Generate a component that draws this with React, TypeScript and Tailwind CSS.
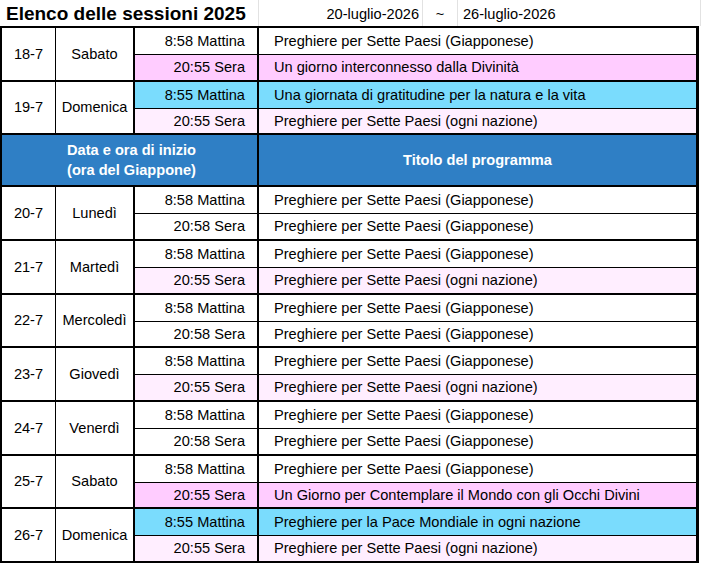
const PINK = "bg-[#ffccff]";
const LIGHT = "bg-[#ffeeff]";
const CYAN = "bg-[#7adcfd]";
const WHITE = "bg-white";

type Slot = { time: string; title: string; bg: string };
type Day = { date: string; day: string; short?: boolean; slots: [Slot, Slot] };

const GIAP = "Preghiere per Sette Paesi (Giapponese)";
const OGNI = "Preghiere per Sette Paesi (ogni nazione)";

const topDays: Day[] = [
  {
    date: "18-7",
    day: "Sabato",
    slots: [
      { time: "8:58 Mattina", title: GIAP, bg: WHITE },
      { time: "20:55 Sera", title: "Un giorno interconnesso dalla Divinità", bg: PINK },
    ],
  },
  {
    date: "19-7",
    day: "Domenica",
    short: true,
    slots: [
      { time: "8:55 Mattina", title: "Una giornata di gratitudine per la natura e la vita", bg: CYAN },
      { time: "20:55 Sera", title: OGNI, bg: LIGHT },
    ],
  },
];

const days: Day[] = [
  {
    date: "20-7",
    day: "Lunedì",
    slots: [
      { time: "8:58 Mattina", title: GIAP, bg: WHITE },
      { time: "20:58 Sera", title: GIAP, bg: WHITE },
    ],
  },
  {
    date: "21-7",
    day: "Martedì",
    slots: [
      { time: "8:58 Mattina", title: GIAP, bg: WHITE },
      { time: "20:55 Sera", title: OGNI, bg: LIGHT },
    ],
  },
  {
    date: "22-7",
    day: "Mercoledì",
    short: true,
    slots: [
      { time: "8:58 Mattina", title: GIAP, bg: WHITE },
      { time: "20:58 Sera", title: GIAP, bg: WHITE },
    ],
  },
  {
    date: "23-7",
    day: "Giovedì",
    slots: [
      { time: "8:58 Mattina", title: GIAP, bg: WHITE },
      { time: "20:55 Sera", title: OGNI, bg: LIGHT },
    ],
  },
  {
    date: "24-7",
    day: "Venerdì",
    slots: [
      { time: "8:58 Mattina", title: GIAP, bg: WHITE },
      { time: "20:58 Sera", title: GIAP, bg: WHITE },
    ],
  },
  {
    date: "25-7",
    day: "Sabato",
    short: true,
    slots: [
      { time: "8:58 Mattina", title: GIAP, bg: WHITE },
      { time: "20:55 Sera", title: "Un Giorno per Contemplare il Mondo con gli Occhi Divini", bg: PINK },
    ],
  },
  {
    date: "26-7",
    day: "Domenica",
    slots: [
      { time: "8:55 Mattina", title: "Preghiere per la Pace Mondiale in ogni nazione", bg: CYAN },
      { time: "20:55 Sera", title: OGNI, bg: LIGHT },
    ],
  },
];

function DayBlock({ d, first }: { d: Day; first: boolean }) {
  return (
    <div className={`flex ${first ? "" : "border-t-2 border-black"}`}>
      <div className="w-[54px] shrink-0 border-r border-black flex items-center justify-center">
        {d.date}
      </div>
      <div className="w-[79px] shrink-0 border-r-2 border-black flex items-center justify-center">
        {d.day}
      </div>
      <div className="flex-1 flex flex-col">
        {d.slots.map((s, i) => (
          <div
            key={i}
            className={`flex ${s.bg} ${
              i === 0 ? "h-[27px] border-b border-black" : d.short ? "h-[24px]" : "h-[25px]"
            }`}
          >
            <div className="w-[124px] shrink-0 border-r-2 border-black flex items-center justify-end pr-[12px]">
              {s.time}
            </div>
            <div className="flex-1 flex items-center pl-[15px] whitespace-nowrap">{s.title}</div>
          </div>
        ))}
      </div>
    </div>
  );
}

export default function App() {
  return (
    <div className="w-[703px] h-[575px] bg-white text-black font-['Liberation_Sans',Arial,sans-serif] text-[14.6px] leading-none">
      {/* title row */}
      <div className="flex h-[26px]">
        <div className="w-[259px] border-r border-[#e2e2e2] flex items-center pl-[6px] pt-[1px] font-bold text-[19px]">
          Elenco delle sessioni 2025
        </div>
        <div className="w-[164px] border-r border-[#e2e2e2] flex items-center justify-end pr-[3px] pt-[2px]">
          20-luglio-2026
        </div>
        <div className="w-[35px] border-r border-[#e2e2e2] flex items-center justify-center pt-[2px]">
          ~
        </div>
        <div className="w-[243px] border-r border-[#e2e2e2] flex items-center pl-[5px] pt-[2px]">
          26-luglio-2026
        </div>
      </div>

      {/* table */}
      <div className="w-[699px] border-2 border-r-[3px] border-black">
        {topDays.map((d, i) => (
          <DayBlock key={d.date} d={d} first={i === 0} />
        ))}

        <div className="flex h-[54px] border-y-2 border-black bg-[#2f7fc5] text-white font-bold">
          <div className="w-[257px] shrink-0 border-r-2 border-black flex flex-col items-center justify-center leading-[20px] pl-[4px]">
            <span>Data e ora di inizio</span>
            <span>(ora del Giappone)</span>
          </div>
          <div className="flex-1 flex items-center justify-center">Titolo del programma</div>
        </div>

        {days.map((d, i) => (
          <DayBlock key={d.date} d={d} first={i === 0} />
        ))}
      </div>
    </div>
  );
}
